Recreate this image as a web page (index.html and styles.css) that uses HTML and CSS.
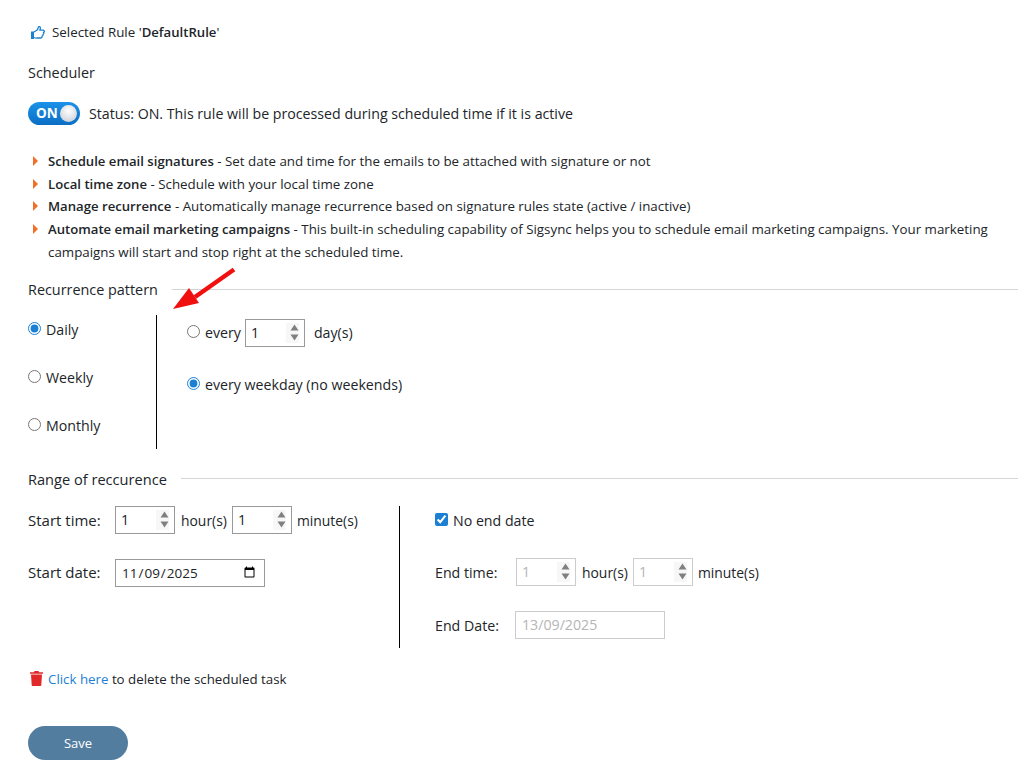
FILE: index.html
```html
<!DOCTYPE html>
<html lang="en">
<head>
<meta charset="utf-8">
<title>Scheduler</title>
<link rel="stylesheet" href="styles.css">
</head>
<body>
<main class="page">
  <p class="selected">
    <svg class="thumb" viewBox="0 0 14 13" width="14" height="13"><path d="M0 5.500h3V13H0z" fill="#1b82cf"/><path d="M3 6 6.500 3.800 7.300 1.200C7.500.4 8.600.3 9.100 1c.5.800.3 1.900-.3 3.200h3.400c1.500 0 1.500 2 .2 2.300.6.700.3 1.700-.5 2 .2.800-.2 1.500-.9 1.700.2 1-.4 1.800-1.500 1.800H6.500C5 12.300 4 11.900 3 11.500" fill="none" stroke="#1b82cf" stroke-width="1.300" stroke-linejoin="round"/></svg>
    <span>Selected Rule '<b>DefaultRule</b>'</span>
  </p>
  <h2 class="title">Scheduler</h2>
  <div class="status">
    <span class="toggle"><span class="toggle-text">ON</span><span class="knob"></span></span>
    <span class="status-text">Status: ON. This rule will be processed during scheduled time if it is active</span>
  </div>
  <ul class="features">
    <li><b>Schedule email signatures</b> - Set date and time for the emails to be attached with signature or not</li>
    <li><b>Local time zone</b> - Schedule with your local time zone</li>
    <li><b>Manage recurrence</b> - Automatically manage recurrence based on signature rules state (active / inactive)</li>
    <li><b>Automate email marketing campaigns</b> - This built-in scheduling capability of Sigsync helps you to schedule email marketing campaigns. Your marketing campaigns will start and stop right at the scheduled time.</li>
  </ul>

  <div class="legend legend-pattern"><span>Recurrence pattern</span><i></i></div>
  <section class="pattern">
    <div class="freq">
      <label class="opt"><input type="radio" name="freq" checked>Daily</label>
      <label class="opt"><input type="radio" name="freq">Weekly</label>
      <label class="opt"><input type="radio" name="freq">Monthly</label>
    </div>
    <div class="freq-detail">
      <div class="every-row">
        <label class="opt"><input type="radio" name="day">every</label>
        <input class="num" type="number" value="1">
        <span class="days">day(s)</span>
      </div>
      <label class="opt weekday"><input type="radio" name="day" checked>every weekday (no weekends)</label>
    </div>
  </section>

  <div class="legend legend-range"><span>Range of reccurence</span><i></i></div>
  <section class="range">
    <div class="range-start">
      <div class="row">
        <span class="lbl">Start time:</span>
        <input class="num" type="number" value="1"><span class="unit">hour(s)</span>
        <input class="num" type="number" value="1"><span class="unit">minute(s)</span>
      </div>
      <div class="row date-row">
        <span class="lbl">Start date:</span>
        <input class="date date-native" type="date" value="2025-11-09">
      </div>
    </div>
    <div class="range-end">
      <label class="opt noend"><input type="checkbox" checked>No end date</label>
      <div class="row end-time">
        <span class="lbl lbl-end">End time:</span>
        <input class="num" type="number" value="1" disabled><span class="unit">hour(s)</span>
        <input class="num" type="number" value="1" disabled><span class="unit">minute(s)</span>
      </div>
      <div class="row end-date">
        <span class="lbl lbl-end-date">End Date:</span>
        <input class="date" type="text" value="13/09/2025" disabled>
      </div>
    </div>
  </section>

  <p class="delete">
    <svg class="trash" viewBox="0 0 13 15" width="13" height="15"><path fill="#e02a2a" d="M4.500 0h4l.6 1.300H13v1.400H0V1.300h3.900z"/><path fill="#e02a2a" d="M1 3.500h11l-.7 10.400c0 .6-.5 1.100-1 1.100H2.700c-.5 0-1-.5-1-1.100z"/></svg>
    <span><a href="#">Click here</a> to delete the scheduled task</span>
  </p>
  <button class="save" type="button">Save</button>
</main>
<svg class="arrow" viewBox="0 0 70 50" width="70" height="50"><path d="M64 5.500 25 33" stroke="#f01010" stroke-width="4.500" fill="none"/><path d="M3 45 19 24 29 39z" fill="#f01010"/></svg>
</body>
</html>
```
FILE: styles.css
```css
* { box-sizing: border-box; }
html, body { margin: 0; padding: 0; }
body {
  position: relative;
  height: 777px;
  overflow: hidden;
  background: #fff;
  color: #212529;
  font-family: "Open Sans", "Noto Sans", sans-serif;
  font-size: 13px;
  line-height: 20px;
}
.page { padding: 22px 8px 0 28px; }
p { margin: 0; }
b { font-weight: 600; font-size: 13.150px; }
.selected { display: flex; align-items: center; gap: 7px; padding-left: 3px; font-size: 13.350px; height: 20px; }
.thumb { flex: none; }
.title { margin: 21px 0 0; font-size: 14.400px; font-weight: 500; line-height: 20px; }
.status { display: flex; align-items: center; gap: 9px; margin-top: 18px; height: 24px; font-size: 14.200px; }
.status-text { padding-top: 2px; }
.toggle {
  position: relative; display: block; flex: none; width: 52px; height: 23px; border-radius: 12px;
  background: linear-gradient(#1b92e8, #0b6ec4);
}
.toggle-text { position: absolute; left: 8px; top: 1px; color: #fff; font-weight: 700; font-size: 13.500px; }
.knob { position: absolute; right: 3px; top: 3px; width: 17px; height: 17px; border-radius: 50%; background: radial-gradient(circle at 50% 35%, #fff, #c2c8d2); }
.features { list-style: none; margin: 25px 0 0; padding: 0 0 0 20px; font-size: 13.350px; line-height: 22.700px; }
.features li { position: relative; }
.features li::before {
  content: ""; position: absolute; left: -15px; top: 6px;
  border-left: 5px solid #f0702a; border-top: 5px solid transparent; border-bottom: 5px solid transparent;
}
.legend { display: flex; align-items: center; font-size: 14.400px; font-weight: 500; height: 20px; gap: 14px; }
.legend i { flex: 1; height: 1px; background: #d5d5d5; }
.legend-pattern { margin-top: 16px; }
.legend-range { margin-top: 20px; font-size: 14.600px; }
.pattern { display: flex; margin-top: 15px; height: 134px; font-size: 14.200px; }
.freq { width: 129px; border-right: 1px solid #000; display: flex; flex-direction: column; gap: 28px; padding-top: 5px; }
.opt { display: flex; align-items: center; height: 20px; gap: 5px; }
.opt input { margin: 0 0 2px; width: 13px; height: 13px; accent-color: #1b7fd4; flex: none; }
.freq-detail { padding: 4px 0 0 30px; }
.every-row { display: flex; align-items: center; height: 28px; }
.weekday { margin-top: 28px; }
.days { margin-left: 9px; }
.num {
  width: 60px; height: 28px; margin: 0 5px; padding: 1px 5px; border: 1px solid #999; border-radius: 0;
  font: inherit; color: #212529; background: #fff;
}
.num::-webkit-inner-spin-button {
  -webkit-appearance: none; appearance: none; opacity: 1; width: 13px; height: 20px; margin-right: 0;
  background: #f7f7f7 url("data:image/svg+xml,%3Csvg xmlns='http://www.w3.org/2000/svg' width='13' height='20'%3E%3Cpath fill='%23808080' d='M8.500 1.500 12.500 7.500H4.500zM4.500 11.500H12.500L8.500 17.500z'/%3E%3C/svg%3E") no-repeat center;
}
.num:disabled, .date:disabled { border-color: #ccc; color: #b5b5b5; }
.every-row .num { margin: 0 0 0 4px; }
.range { display: flex; margin-top: 17px; height: 142px; font-size: 14.200px; }
.range-start { width: 372px; border-right: 1px solid #000; }
.row { display: flex; align-items: center; height: 28px; }
.lbl { width: 87px; flex: none; font-size: 15px; }
.row .num:first-of-type { margin-left: 0; margin-right: 6px; }
.unit { font-size: 13.900px; padding-top: 2px; }
.date-row { margin-top: 25px; }
.date-row .lbl { margin-bottom: 2px; }
.date { width: 150px; height: 28px; padding: 1px 6px; border: 1px solid #999; border-radius: 0; font: inherit; color: #212529; background: #fff; }
.date-native { padding-left: 5px; font-size: 13.500px; }
.range-end { padding: 1px 0 0 35px; }
.noend { height: 28px; }
.end-time { margin-top: 23px; }
.end-date { margin-top: 25px; }
.lbl-end { width: 81px; font-size: 14.200px; padding-top: 2px; }
.lbl-end-date { width: 80px; font-size: 14.200px; padding-top: 2px; }
.delete { display: flex; align-items: center; gap: 5px; margin-top: 21px; padding-left: 2px; font-size: 13.300px; height: 20px; }
.delete a { color: #1b7fd4; text-decoration: none; }
.trash { flex: none; }
.save {
  display: block; width: 100px; height: 34px; margin-top: 37px; border: 0; border-radius: 17px;
  background: #527d9f; color: #fff; font: inherit;
}
.arrow { position: absolute; left: 170px; top: 264px; }
```
